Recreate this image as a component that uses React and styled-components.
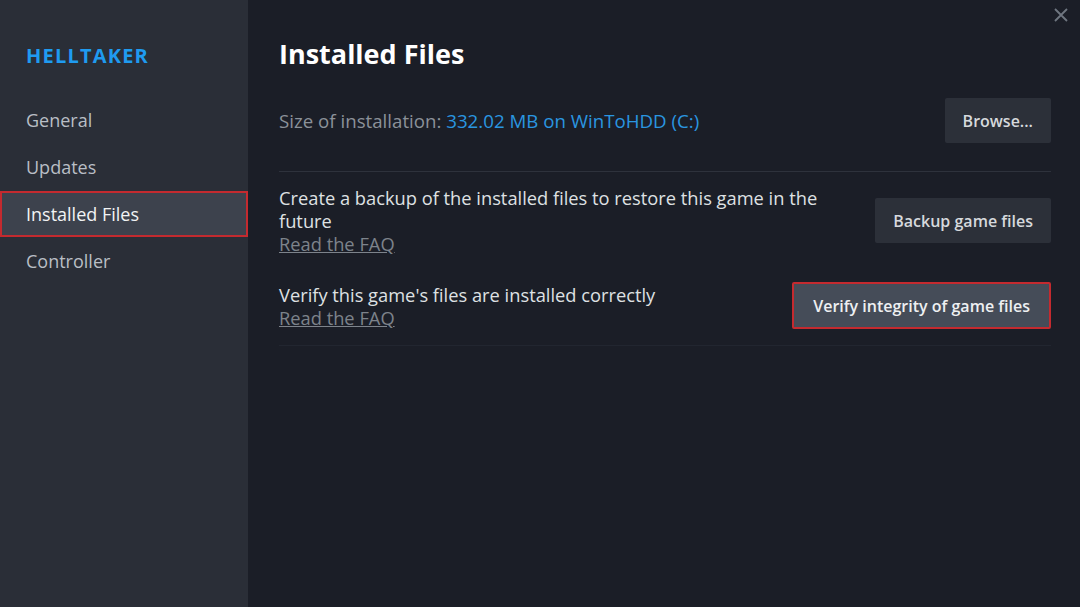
import React from "react";
import styled, { createGlobalStyle } from "styled-components";

const GlobalStyle = createGlobalStyle`
  html, body {
    margin: 0;
    padding: 0;
    background: #1b1e27;
  }
  #root {
    width: 1080px;
    height: 607px;
  }
`;

const Window = styled.div`
  display: flex;
  width: 1080px;
  height: 607px;
  background: #1b1e27;
  font-family: "Open Sans", "Noto Sans", sans-serif;
  color: #dcdedf;
  position: relative;
  overflow: hidden;
`;

const Sidebar = styled.div`
  width: 248px;
  flex-shrink: 0;
  background: #2a2e37;
  display: flex;
  flex-direction: column;
  padding-top: 42px;
  box-sizing: border-box;
`;

const GameTitle = styled.div`
  color: #1f9bf0;
  font-size: 20px;
  font-weight: 700;
  letter-spacing: 1.2px;
  padding-left: 26px;
  margin-bottom: 28px;
`;

const NavItem = styled.div`
  height: 46px;
  margin-bottom: 1px;
  display: flex;
  align-items: center;
  padding-left: 24px;
  font-size: 18px;
  box-sizing: border-box;
  color: ${p => (p.active ? "#f2f3f4" : "#b9bec5")};
  background: ${p => (p.active ? "#3d424d" : "transparent")};
  border: 2px solid ${p => (p.active ? "#c42a2f" : "transparent")};
`;

const Main = styled.div`
  flex: 1;
  padding: 36px 29px 0 31px;
  display: flex;
  flex-direction: column;
`;

const Title = styled.h1`
  margin: 0 0 26px;
  font-size: 27px;
  font-weight: 700;
  color: #ffffff;
  line-height: 36px;
`;

const Row = styled.div`
  display: flex;
  align-items: center;
  justify-content: space-between;
  padding: ${p => p.pad || "0"};
  border-bottom: 1px solid ${p => p.line || "transparent"};
`;

const RowText = styled.div`
  font-size: 18.3px;
  line-height: 23px;
  color: #dfe1e3;
  max-width: 560px;
`;

const Muted = styled.span`
  color: #8b9199;
  font-size: 18.7px;
`;

const Value = styled.span`
  color: #2a96e0;
  font-size: 18.7px;
`;

const Faq = styled.a`
  display: block;
  color: #7d838b;
  text-decoration: underline;
  font-size: 18.3px;
  line-height: 23px;
`;

const Button = styled.button`
  font-family: inherit;
  font-size: 16px;
  font-weight: 600;
  color: ${p => (p.highlight ? "#eef0f2" : "#d6d9dd")};
  background: ${p => (p.highlight ? "#454c58" : "#2c3039")};
  border: ${p => (p.highlight ? "2px solid #c42a2f" : "none")};
  border-radius: 2px;
  height: ${p => (p.highlight ? "47px" : "45px")};
  padding: 0 ${p => (p.highlight ? "19px" : "18px")};
  flex-shrink: 0;
  cursor: pointer;
`;

const CloseButton = styled.div`
  position: absolute;
  top: 6px;
  right: 10px;
  width: 18px;
  height: 18px;
  display: flex;
  align-items: center;
  justify-content: center;
`;

export default function App() {
  return (
    <>
      <GlobalStyle />
      <Window>
        <Sidebar>
          <GameTitle>HELLTAKER</GameTitle>
          <NavItem>General</NavItem>
          <NavItem>Updates</NavItem>
          <NavItem active>Installed Files</NavItem>
          <NavItem>Controller</NavItem>
        </Sidebar>
        <Main>
          <Title>Installed Files</Title>
          <Row pad="0 0 28px" line="#2e323c">
            <RowText>
              <Muted>Size of installation: </Muted>
              <Value>332.02 MB on WinToHDD (C:)</Value>
            </RowText>
            <Button>Browse...</Button>
          </Row>
          <Row pad="14px 0 0">
            <div>
              <RowText>Create a backup of the installed files to restore this game in the future</RowText>
              <Faq>Read the FAQ</Faq>
            </div>
            <Button>Backup game files</Button>
          </Row>
          <Row pad="26px 0 16px" line="#222630">
            <div>
              <RowText>Verify this game's files are installed correctly</RowText>
              <Faq>Read the FAQ</Faq>
            </div>
            <Button highlight>Verify integrity of game files</Button>
          </Row>
        </Main>
        <CloseButton>
          <svg width="14" height="14" viewBox="0 0 14 14">
            <path d="M1 1L13 13M13 1L1 13" stroke="#6f7680" strokeWidth="1.8" />
          </svg>
        </CloseButton>
      </Window>
    </>
  );
}
